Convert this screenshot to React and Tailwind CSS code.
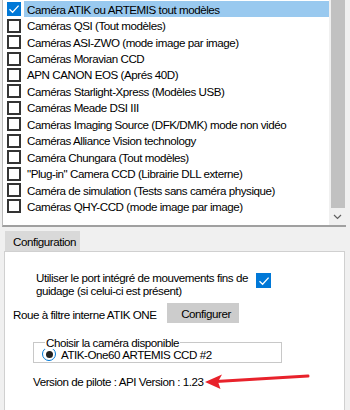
import React from "react";

const items = [
  "Caméra ATIK ou ARTEMIS tout modèles",
  "Caméras QSI (Tout modèles)",
  "Caméras ASI-ZWO (mode image par image)",
  "Caméras Moravian CCD",
  "APN CANON EOS (Aprés 40D)",
  "Caméras Starlight-Xpress (Modèles USB)",
  "Caméras Meade DSI III",
  "Caméras Imaging Source (DFK/DMK) mode non vidéo",
  "Caméras Alliance Vision technology",
  "Caméra Chungara (Tout modèles)",
  "\"Plug-in\" Camera CCD (Librairie DLL externe)",
  "Caméra de simulation (Tests sans caméra physique)",
  "Caméras QHY-CCD (mode image par image)",
];

function CheckIcon() {
  return (
    <svg width="14" height="14" viewBox="0 0 14 14">
      <path d="M2.5 7.2 L5.6 10.2 L11.6 3.6" fill="none" stroke="#ffffff" strokeWidth="1.3" />
    </svg>
  );
}

function Checked() {
  return (
    <div className="w-[14px] h-[14px] bg-[#0078d7] flex items-center justify-center shrink-0">
      <CheckIcon />
    </div>
  );
}

function Unchecked() {
  return <div className="w-[14px] h-[14px] border-2 border-[#333333] bg-white shrink-0" />;
}

export default function App() {
  return (
    <div
      className="relative w-[350px] h-[410px] overflow-hidden bg-[#f0f0f0] text-black text-[11.6px] leading-[13px] tracking-[-0.45px]"
      style={{ fontFamily: '"Liberation Sans", Arial, sans-serif' }}
    >
      {/* List box */}
      <div className="ml-[2px] w-[344px] h-[227px] bg-white border-l border-l-[#b9b9b9] border-b-2 border-b-[#a0a0a0] flex">
        <div className="w-[326px] pt-[1px] flex flex-col">
          {items.map((t, i) => (
            <div key={i} className="h-[16.45px] flex items-center pl-[4px]">
              {i === 0 ? <Checked /> : <Unchecked />}
              <div
                className={
                  "ml-[3px] pl-[3px] h-full flex items-center whitespace-nowrap " +
                  (i === 0 ? "flex-1 bg-[#99c9ef]" : "")
                }
              >
                {t}
              </div>
            </div>
          ))}
        </div>
        <div className="w-[17px] bg-[#f0f0f0] flex flex-col">
          <div className="ml-[2px] w-[14px] h-[208px] bg-[#c1c1c1]" />
          <div className="flex justify-center mt-[6px]">
            <svg width="9" height="6" viewBox="0 0 9 6">
              <path d="M1 1 L4.5 4.5 L8 1" fill="none" stroke="#606060" strokeWidth="1.2" />
            </svg>
          </div>
        </div>
      </div>

      {/* Tab header */}
      <div className="mt-[4px] ml-[5px] w-[75px] h-[20px] bg-[#d9d9d9] flex items-center pl-[8px]">
        Configuration
      </div>

      {/* Tab page */}
      <div className="ml-[4px] w-[341px] h-[200px] bg-white border border-[#d0d0d0] flex flex-col">
        <div className="mt-[19px] pl-[31px] flex items-start">
          <div className="w-[212px] whitespace-nowrap">
            Utiliser le port intégré de mouvements fins de
            <br />
            guidage (si celui-ci est présent)
          </div>
          <div className="ml-[8px] mt-[2px] w-[15px] h-[15px] bg-[#0078d7] flex items-center justify-center">
            <CheckIcon />
          </div>
        </div>

        <div className="mt-[6px] pl-[8px] flex items-center h-[20px]">
          <div className="w-[154px] whitespace-nowrap pt-[2px]">Roue à filtre interne ATIK ONE</div>
          <div className="w-[72px] h-[20px] bg-[#cccccc] flex items-center justify-center pl-[6px]">
            Configurer
          </div>
        </div>

        <div className="mt-[19px] ml-[28px] w-[249px] h-[21px] border border-[#c8c8c8] relative flex items-center pl-[8px]">
          <div className="absolute left-[11px] top-[-7px] bg-white px-[1px] whitespace-nowrap">
            Choisir la caméra disponible
          </div>
          <div className="mt-[3px] w-[14px] h-[14px] rounded-full border-[1.5px] border-[#0078d7] flex items-center justify-center">
            <div className="w-[7px] h-[7px] rounded-full bg-[#222222]" />
          </div>
          <div className="ml-[5px] mt-[3px] whitespace-nowrap">ATIK-One60 ARTEMIS CCD #2</div>
        </div>

        <div className="mt-[12px] pl-[28px] whitespace-nowrap">Version de pilote : API Version : 1.23</div>
      </div>

      {/* Red arrow annotation */}
      <svg className="absolute left-0 top-0" width="350" height="410" viewBox="0 0 350 410">
        <line x1="308" y1="376" x2="216" y2="381.5" stroke="#e8222b" strokeWidth="3" strokeLinecap="round" />
        <path d="M205 382 L222 374.5 L218 381.8 L220.5 389 Z" fill="#e8222b" />
      </svg>
    </div>
  );
}
